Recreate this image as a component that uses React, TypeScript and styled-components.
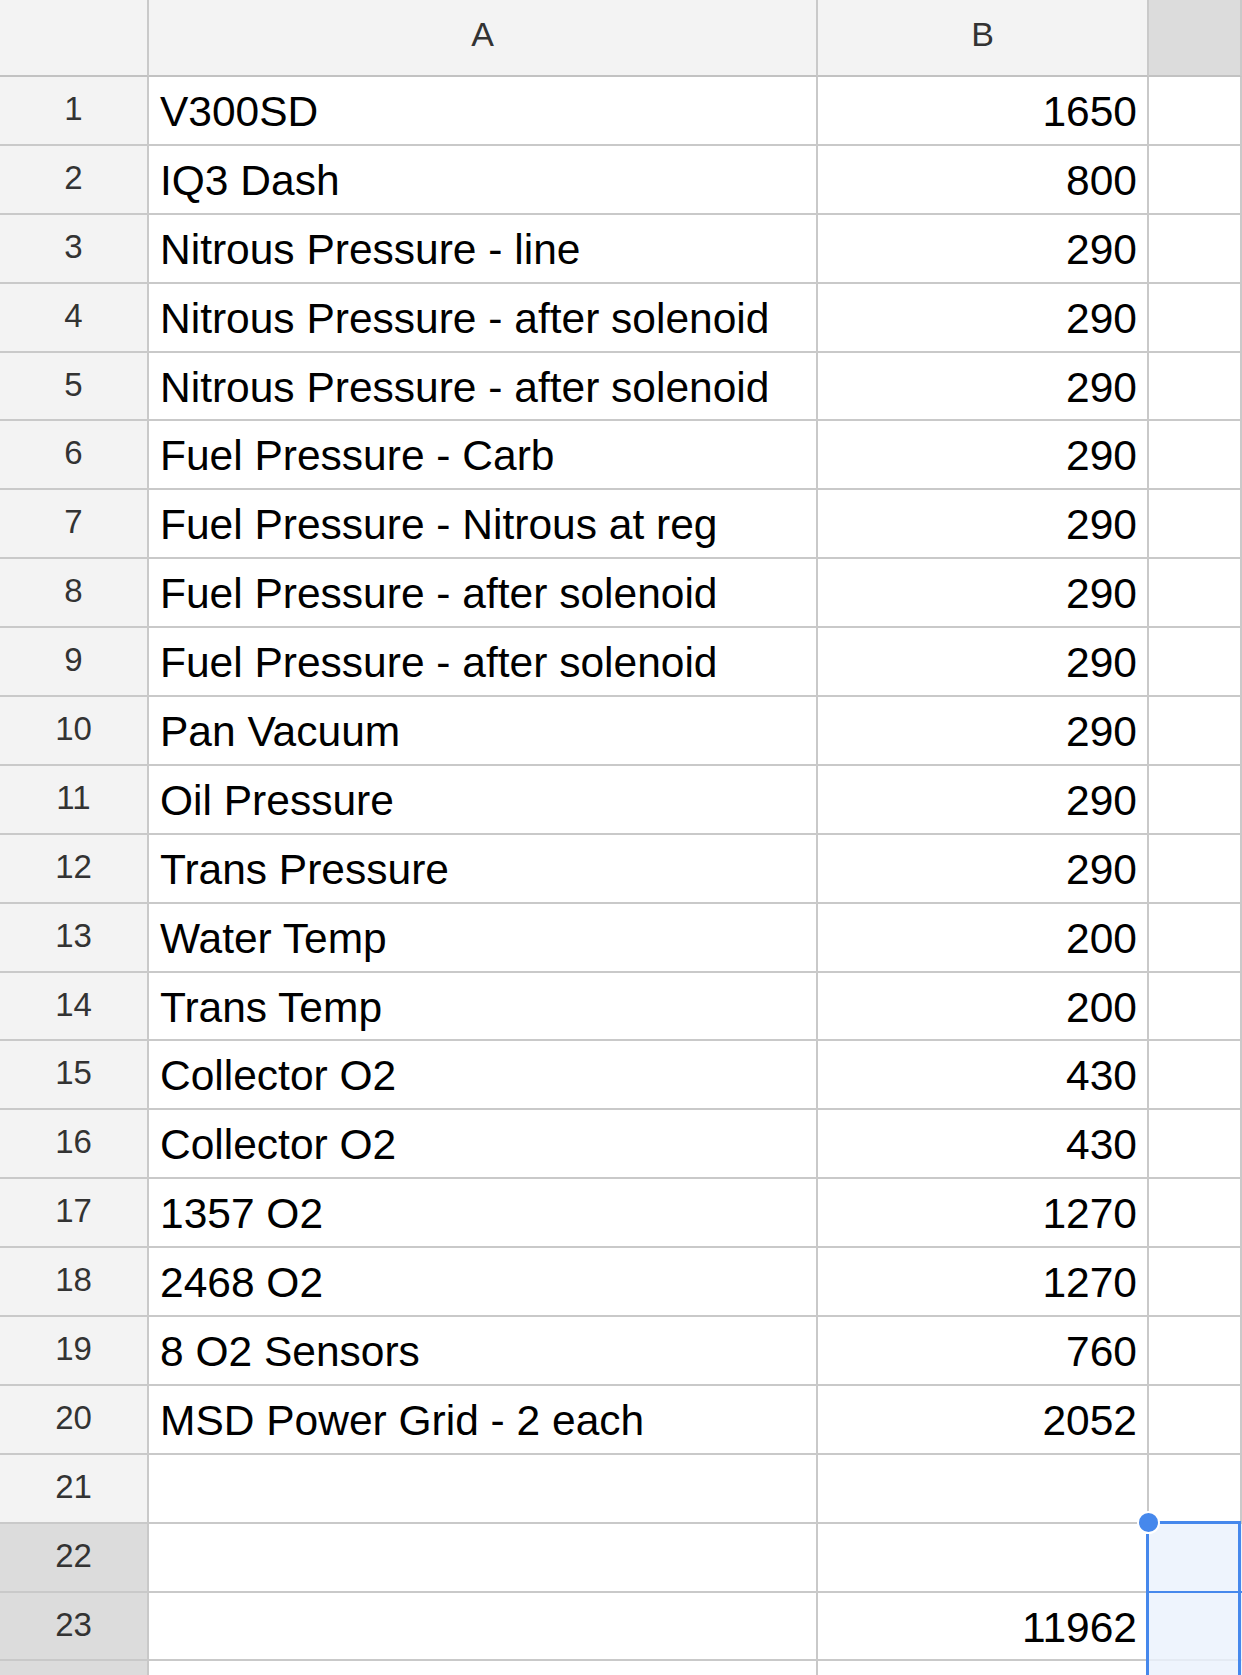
import React from 'react';
import styled, { createGlobalStyle } from 'styled-components';

const GlobalStyle = createGlobalStyle`
  html, body {
    margin: 0;
    padding: 0;
    background: #ffffff;
    overflow: hidden;
  }
  body {
    font-family: "Liberation Sans", Arial, Helvetica, sans-serif;
  }
`;

const GRID = '#c9c9c9';
const BLUE = '#4688ec';

const Sheet = styled.div`
  display: grid;
  grid-template-columns: 149px 669px 331px 93px;
  grid-auto-rows: 68.9px;
  grid-template-rows: 77px;
  width: 1242px;
  height: 1675px;
  overflow: hidden;
`;

const Corner = styled.div`
  background: #f3f3f3;
  border-right: 2px solid ${GRID};
  border-bottom: 2px solid #c2c2c2;
`;

const ColHeader = styled.div<{ $active?: boolean }>`
  background: ${(p) => (p.$active ? '#dcdcdc' : '#f3f3f3')};
  border-right: 2px solid ${GRID};
  border-bottom: 2px solid #c2c2c2;
  display: flex;
  align-items: center;
  justify-content: center;
  padding-bottom: 6px;
  font-size: 34px;
  color: #333333;
`;

const RowHeader = styled.div<{ $active?: boolean }>`
  background: ${(p) => (p.$active ? '#dcdcdc' : '#f3f3f3')};
  border-right: 2px solid ${GRID};
  border-bottom: 2px solid ${GRID};
  display: flex;
  align-items: center;
  justify-content: center;
  padding-bottom: 3px;
  font-size: 33px;
  color: #333333;
`;

const Cell = styled.div<{ $align?: 'left' | 'right' }>`
  background: #ffffff;
  border-right: 2px solid ${GRID};
  border-bottom: 2px solid ${GRID};
  display: flex;
  align-items: center;
  justify-content: ${(p) => (p.$align === 'right' ? 'flex-end' : 'flex-start')};
  padding: 3px 10px 0 11px;
  font-size: 42.5px;
  color: #000000;
  white-space: nowrap;
  overflow: hidden;
`;

const SelectedCell = styled.div<{ $first?: boolean; $divider?: boolean }>`
  position: relative;
  background: #eef4fd;
  border-bottom: 2px solid ${(p) => (p.$divider ? BLUE : '#e4eaf3')};

  &::after {
    content: '';
    position: absolute;
    left: -3px;
    right: 1px;
    top: ${(p) => (p.$first ? '-3px' : '-2px')};
    bottom: -2px;
    border-left: 3px solid ${BLUE};
    border-right: 3px solid ${BLUE};
    border-top: ${(p) => (p.$first ? `3px solid ${BLUE}` : 'none')};
    pointer-events: none;
  }
`;

const Handle = styled.span`
  position: absolute;
  left: -12px;
  top: -13px;
  width: 19px;
  height: 19px;
  border-radius: 50%;
  background: ${BLUE};
  border: 2px solid #ffffff;
  z-index: 2;
`;

const rows: [string, string][] = [
  ['V300SD', '1650'],
  ['IQ3 Dash', '800'],
  ['Nitrous Pressure - line', '290'],
  ['Nitrous Pressure - after solenoid', '290'],
  ['Nitrous Pressure - after solenoid', '290'],
  ['Fuel Pressure - Carb', '290'],
  ['Fuel Pressure - Nitrous at reg', '290'],
  ['Fuel Pressure - after solenoid', '290'],
  ['Fuel Pressure - after solenoid', '290'],
  ['Pan Vacuum', '290'],
  ['Oil Pressure', '290'],
  ['Trans Pressure', '290'],
  ['Water Temp', '200'],
  ['Trans Temp', '200'],
  ['Collector O2', '430'],
  ['Collector O2', '430'],
  ['1357 O2', '1270'],
  ['2468 O2', '1270'],
  ['8 O2 Sensors', '760'],
  ['MSD Power Grid - 2 each', '2052'],
  ['', ''],
  ['', ''],
  ['', '11962'],
  ['', ''],
];

const App: React.FC = () => {
  return (
    <>
      <GlobalStyle />
      <Sheet>
        <Corner />
        <ColHeader>A</ColHeader>
        <ColHeader>B</ColHeader>
        <ColHeader $active />
        {rows.map(([label, value], i) => {
          const n = i + 1;
          const selected = n >= 22;
          // the last row is only a sliver at the bottom edge; its number isn't visible
          const visible = n < rows.length;
          return (
            <React.Fragment key={n}>
              <RowHeader $active={selected}>{visible ? n : ''}</RowHeader>
              <Cell>{label}</Cell>
              <Cell $align="right">{value}</Cell>
              {selected ? (
                <SelectedCell $first={n === 22} $divider={n === 22}>
                  {n === 22 && <Handle />}
                </SelectedCell>
              ) : (
                <Cell />
              )}
            </React.Fragment>
          );
        })}
      </Sheet>
    </>
  );
};

export default App;
